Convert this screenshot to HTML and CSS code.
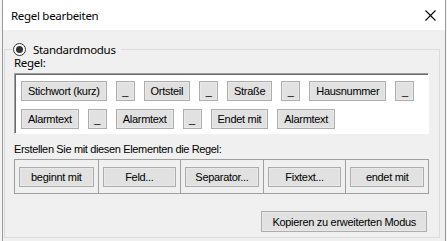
FILE: index.html
```html
<!DOCTYPE html>
<html lang="de">
<head>
    <meta charset="UTF-8">
    <title>Regel bearbeiten</title>
    <link rel="stylesheet" href="styles.css">
</head>
<body>
    <div class="dialog">
        <div class="titlebar">
            <span class="title">Regel bearbeiten</span>
            <svg class="close" width="11" height="11" viewBox="0 0 11 11">
                <path d="M0.5 0.5 L10.5 10.5 M10.5 0.5 L0.5 10.5" stroke="#000" stroke-width="1.1" fill="none"/>
            </svg>
        </div>

        <div class="content">
            <fieldset class="group">
                <legend>
                    <span class="radio"><span class="radio-dot"></span></span>
                    <span>Standardmodus</span>
                </legend>

                <div class="caption caption-ui">Regel:</div>
                <div class="rule-box">
                    <div class="rule-row">
                        <button class="btn">Stichwort (kurz)</button>
                        <button class="btn btn-sep">_</button>
                        <button class="btn">Ortsteil</button>
                        <button class="btn btn-sep">_</button>
                        <button class="btn">Straße</button>
                        <button class="btn btn-sep">_</button>
                        <button class="btn">Hausnummer</button>
                        <button class="btn btn-sep">_</button>
                    </div>
                    <div class="rule-row">
                        <button class="btn">Alarmtext</button>
                        <button class="btn btn-sep">_</button>
                        <button class="btn">Alarmtext</button>
                        <button class="btn btn-sep">_</button>
                        <button class="btn">Endet mit</button>
                        <button class="btn">Alarmtext</button>
                    </div>
                </div>

                <div class="caption caption-hint">Erstellen Sie mit diesen Elementen die Regel:</div>
                <div class="palette">
                    <div class="cell"><button class="btn">beginnt mit</button></div>
                    <div class="cell"><button class="btn">Feld...</button></div>
                    <div class="cell"><button class="btn">Separator...</button></div>
                    <div class="cell"><button class="btn">Fixtext...</button></div>
                    <div class="cell"><button class="btn">endet mit</button></div>
                </div>

                <div class="actions">
                    <button class="btn btn-wide">Kopieren zu erweiterten Modus</button>
                </div>
            </fieldset>
        </div>
    </div>
</body>
</html>
```

FILE: styles.css
```css
body {
    margin: 0;
    height: 241px;
    overflow: hidden;
    background: #f4f4f4;
    font-family: "Liberation Sans", Arial, sans-serif;
    font-size: 11px;
    color: #000;
}

.dialog {
    margin-left: 2px;
    width: 444px;
    height: 241px;
    box-sizing: border-box;
    border-left: 1px solid #9a9a9a;
    border-right: 1px solid #9a9a9a;
    background: #f0f0f0;
}

.titlebar {
    height: 30px;
    background: #fff;
    display: flex;
    align-items: center;
    justify-content: space-between;
    padding: 0 9px 0 8px;
    font-family: "Noto Sans", sans-serif;
    font-size: 11.5px;
    letter-spacing: -0.3px;
}

.close {
    display: block;
}

.content {
    padding: 12px 5px 0 1px;
}

.group {
    margin: 0;
    min-width: 0;
    border: 1px solid #dcdcdc;
    padding: 0 10px 5px 9px;
}

.group legend {
    display: flex;
    align-items: center;
    gap: 7px;
    height: 14px;
    margin-left: -1px;
    padding: 0 5px 0 0;
    font-family: "Noto Sans", sans-serif;
    font-size: 11.5px;
    letter-spacing: -0.3px;
}

.radio {
    width: 11px;
    height: 11px;
    border: 1px solid #333;
    border-radius: 50%;
    background: #fff;
    display: flex;
    align-items: center;
    justify-content: center;
}

.radio-dot {
    width: 7px;
    height: 7px;
    border-radius: 50%;
    background: #333;
}

.caption {
    line-height: 14px;
}

.caption-ui {
    font-family: "Noto Sans", sans-serif;
    font-size: 11.5px;
    letter-spacing: -0.3px;
    margin: 0 0 3px;
}

.caption-hint {
    margin-top: 8px;
    letter-spacing: -0.35px;
}

.rule-box {
    background: #fff;
    border-top: 1px solid #a0a0a0;
    border-left: 1px solid #a0a0a0;
    border-bottom: 1px solid #fff;
    border-right: 1px solid #fff;
    box-shadow: inset 1px 1px 0 #696969;
    padding: 7px 5px 4px 6px;
}

.rule-row {
    display: flex;
    gap: 9px;
    margin-bottom: 8px;
}

.rule-row:last-child {
    margin-bottom: 0;
}

.btn {
    font: inherit;
    letter-spacing: -0.3px;
    white-space: nowrap;
    flex-shrink: 0;
    color: #000;
    height: 20px;
    padding: 0 6px;
    background: #e1e1e1;
    border: 1px solid #adadad;
    box-shadow: inset 0 0 0 1px #e8e8e8;
    border-radius: 0;
}

.btn-sep {
    width: 19px;
    padding: 0;
}

.palette {
    display: grid;
    grid-template-columns: repeat(5, 1fr);
    margin-top: 3px;
    border: 1px solid #a0a0a0;
}

.cell {
    padding: 7px 4px 6px;
}

.cell + .cell {
    border-left: 1px solid #a0a0a0;
}

.cell .btn {
    width: 100%;
}

.actions {
    display: flex;
    justify-content: flex-end;
    margin-top: 17px;
    padding-right: 2px;
}

.btn-wide {
    height: 21px;
    padding: 0 10px;
}
```
